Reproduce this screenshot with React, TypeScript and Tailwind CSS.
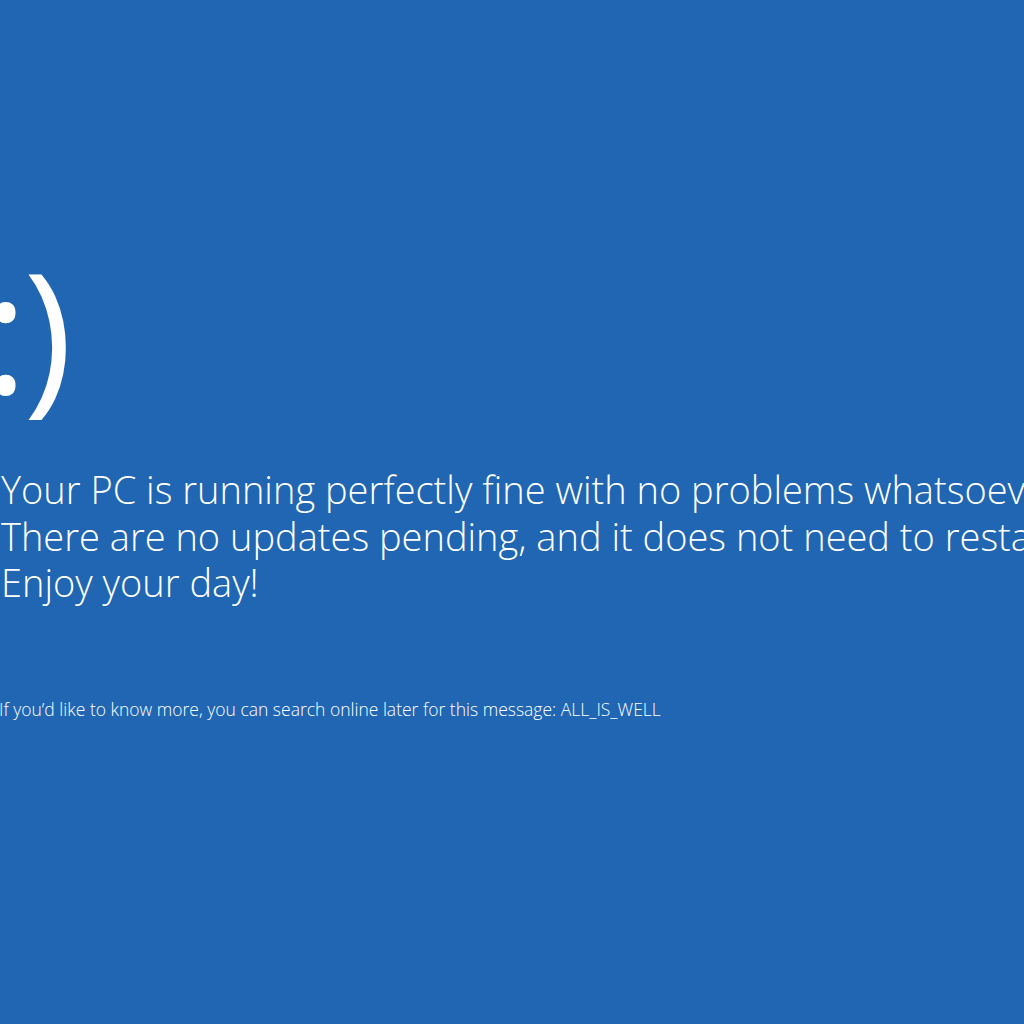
export default function App() {
  return (
    <div
      className="flex h-[1024px] w-[1024px] flex-col overflow-hidden bg-[#2066b2] text-white"
      style={{ fontFamily: '"Open Sans", "Noto Sans", sans-serif' }}
    >
      <div className="-ml-[16px] mt-[230px] h-[200px] whitespace-nowrap text-[166px] font-normal leading-[200px] tracking-[-4px]">
        :)
      </div>
      <div className="mt-[36px] pl-[1px] text-[38px] font-[350] leading-[46.5px] whitespace-nowrap">
        <p>Your PC is running perfectly fine with no problems whatsoever.</p>
        <p>There are no updates pending, and it does not need to restart.</p>
        <p>Enjoy your day!</p>
      </div>
      <p className="mt-[90px] -ml-[1px] text-[17.5px] font-light whitespace-nowrap">
        If you’d like to know more, you can search online later for this message: ALL_IS_WELL
      </p>
    </div>
  );
}
